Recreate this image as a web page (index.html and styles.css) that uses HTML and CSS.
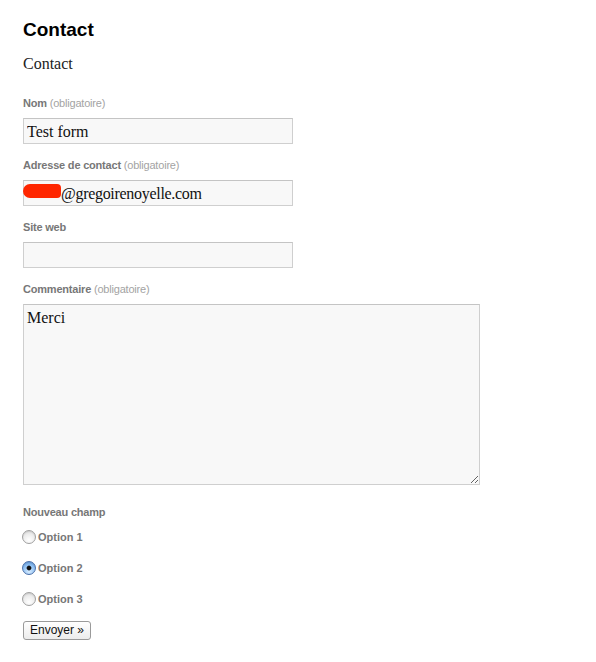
FILE: index.html
```html
<!DOCTYPE html>
<html lang="fr">
<head>
<meta charset="utf-8">
<title>Contact</title>
<link rel="stylesheet" href="styles.css">
</head>
<body>
<div class="page">
  <h1 class="title">Contact</h1>
  <p class="intro">Contact</p>
  <form class="form">
    <div class="field">
      <label class="label">Nom <span class="req">(obligatoire)</span></label>
      <input class="input" type="text" value="Test form">
    </div>
    <div class="field">
      <label class="label">Adresse de contact <span class="req">(obligatoire)</span></label>
      <div class="email-wrap">
        <input class="input input-email" type="text" value="@gregoirenoyelle.com">
        <span class="redact"></span>
      </div>
    </div>
    <div class="field">
      <label class="label">Site web</label>
      <input class="input" type="text" value="">
    </div>
    <div class="field field-area">
      <label class="label">Commentaire <span class="req">(obligatoire)</span></label>
      <textarea class="textarea">Merci</textarea>
    </div>
    <div class="group">
      <div class="label">Nouveau champ</div>
      <label class="radio-row"><input class="radio" type="radio" name="c"><span>Option 1</span></label>
      <label class="radio-row"><input class="radio" type="radio" name="c" checked><span>Option 2</span></label>
      <label class="radio-row"><input class="radio" type="radio" name="c"><span>Option 3</span></label>
    </div>
    <button class="button" type="button">Envoyer »</button>
  </form>
</div>
</body>
</html>
```
FILE: styles.css
```css
html, body {
  margin: 0;
  padding: 0;
  background: #ffffff;
}
.page {
  padding: 19px 23px 20px 23px;
  font-family: "Liberation Sans", Arial, sans-serif;
}
.title {
  margin: 0;
  font-size: 19px;
  line-height: 22px;
  font-weight: bold;
  color: #000;
}
.intro {
  margin: 13px 0 0 0;
  font-family: "Liberation Serif", "Times New Roman", serif;
  font-size: 16px;
  line-height: 20px;
  color: #222;
}
.form {
  margin-top: 22px;
  display: flex;
  flex-direction: column;
  align-items: flex-start;
}
.field {
  display: flex;
  flex-direction: column;
  margin-bottom: 14px;
}
.field-area {
  margin-bottom: 20px;
}
.label {
  display: block;
  font-size: 11px;
  line-height: 14px;
  font-weight: bold;
  letter-spacing: -0.2px;
  color: #777;
  margin-bottom: 8px;
}
.req {
  font-weight: normal;
  color: #a3a3a3;
}
.input {
  box-sizing: border-box;
  width: 270px;
  height: 26px;
  margin: 0;
  padding: 2px 3px 0 3px;
  border: 1px solid #cfcfcf;
  border-top-color: #c4c4c4;
  background: #f8f8f8;
  font-family: "Liberation Serif", "Times New Roman", serif;
  font-size: 16px;
  color: #111;
  outline: none;
}
.email-wrap {
  position: relative;
  width: 270px;
}
.input-email {
  padding-left: 37px;
  letter-spacing: -0.3px;
}
.redact {
  position: absolute;
  left: 0;
  top: 4px;
  width: 38px;
  height: 14px;
  background: #ff2600;
  border-radius: 7px 4px 4px 7px;
}
.textarea {
  box-sizing: border-box;
  width: 457px;
  height: 181px;
  margin: 0;
  padding: 4px 3px;
  border: 1px solid #cfcfcf;
  border-top-color: #c4c4c4;
  background: #f8f8f8;
  font-family: "Liberation Serif", "Times New Roman", serif;
  font-size: 16px;
  color: #111;
  resize: both;
  outline: none;
}
.group {
  display: flex;
  flex-direction: column;
}
.group .label {
  margin-bottom: 2px;
}
.radio-row {
  display: flex;
  align-items: center;
  height: 31px;
  font-size: 11px;
  font-weight: bold;
  color: #777;
}
.radio {
  appearance: none;
  -webkit-appearance: none;
  box-sizing: border-box;
  width: 14px;
  height: 14px;
  margin: 0 2px 0 -1px;
  border-radius: 50%;
  border: 1px solid #a0a0a0;
  background: radial-gradient(circle at 50% 75%, #ffffff 0%, #ececec 55%, #d2d2d2 100%);
  box-shadow: inset 0 1px 1px rgba(0,0,0,0.08);
}
.radio:checked {
  border-color: #4a6fa8;
  background: radial-gradient(circle closest-side at 50% 50%, #111 0%, #111 30%, rgba(17,17,17,0) 48%),
              radial-gradient(circle at 50% 80%, #d7ecff 0%, #8fc0f2 55%, #5d95d6 100%);
}
.button {
  margin-top: 7px;
  box-sizing: border-box;
  width: 68px;
  height: 19px;
  padding: 0;
  border: 1px solid #9a9a9a;
  border-radius: 3px;
  background: linear-gradient(#ffffff, #ececec);
  font-family: "Liberation Sans", Arial, sans-serif;
  font-size: 12px;
  line-height: 17px;
  color: #111;
}
```
